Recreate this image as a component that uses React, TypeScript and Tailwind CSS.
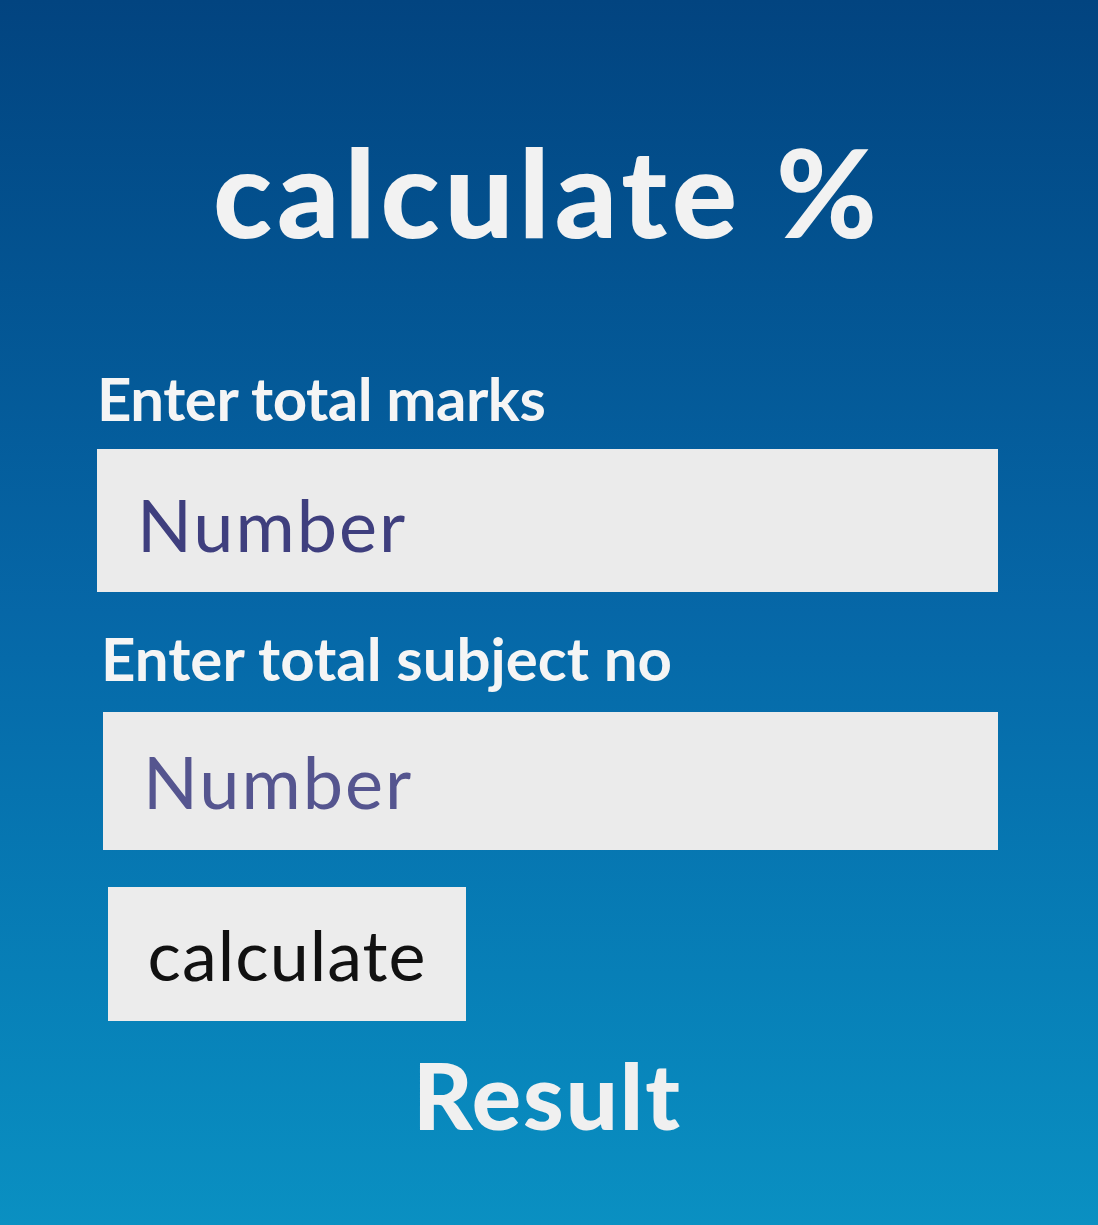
export default function App() {
  return (
    <div className="min-h-[1225px] w-full bg-gradient-to-b from-[#024480] via-[#0667a7] to-[#0a90c2] font-['Lato','Open_Sans',sans-serif] text-white">
      <div className="flex flex-col pl-[97px] pr-[100px] pt-[130px]">
        <h1 className="text-center text-[122px] font-black leading-none tracking-[5px] text-[#f2f2f2]">
          calculate %
        </h1>

        <label className="mt-[116px] text-[60px] font-bold leading-none tracking-[-0.5px] text-[#f5f5f5]">
          Enter total marks
        </label>
        <input
          type="number"
          placeholder="Number"
          className="mt-[21px] h-[143px] w-full bg-[#ebebeb] px-[40px] pt-[6px] text-[72px] tracking-[2px] text-[#3f3f7e] outline-none placeholder:text-[#3f3f7e]"
        />

        <label className="ml-[4px] mt-[36px] text-[60px] font-bold leading-none tracking-[0px] text-[#f5f5f5]">
          Enter total subject no
        </label>
        <input
          type="number"
          placeholder="Number"
          className="ml-[6px] mt-[24px] h-[138px] w-[895px] bg-[#ebebeb] px-[40px] text-[72px] tracking-[2px] text-[#55558f] outline-none placeholder:text-[#55558f]"
        />

        <div>
          <button className="ml-[11px] mt-[37px] h-[134px] w-[358px] bg-[#ececec] text-[70px] tracking-[1px] text-[#111]">
            calculate
          </button>
        </div>

        <h2 className="mt-[28px] text-center text-[92px] font-black leading-none tracking-[2px] text-[#f0f0f0]">
          Result
        </h2>
      </div>
    </div>
  );
}
